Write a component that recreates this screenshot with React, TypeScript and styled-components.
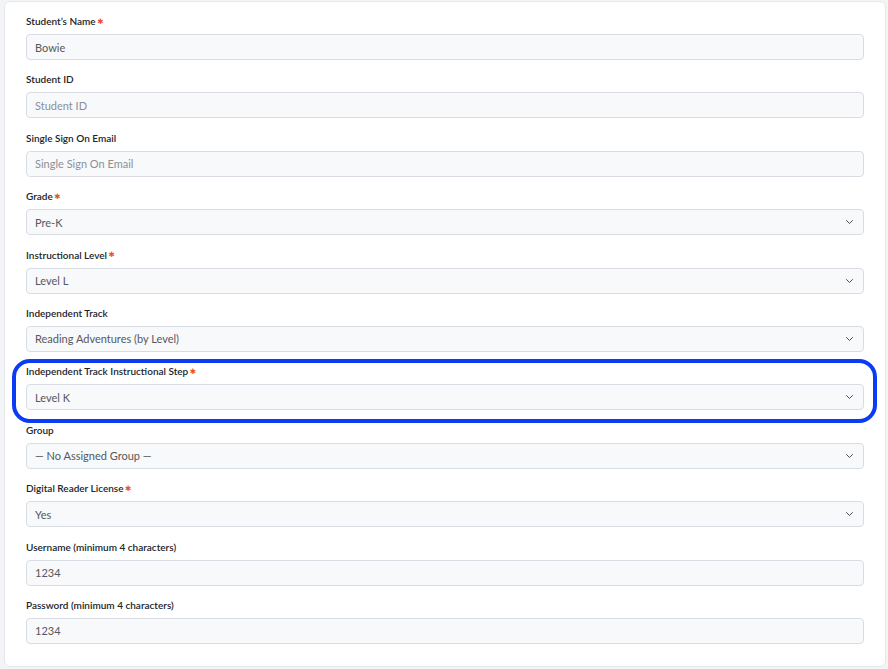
import React from "react";
import styled, { createGlobalStyle } from "styled-components";

const GlobalStyle = createGlobalStyle`
  html, body { margin: 0; padding: 0; background: #f3f4f6; }
  body { font-family: Lato, "Open Sans", Arial, sans-serif; }
  * { box-sizing: border-box; }
`;

const Page = styled.div`
  padding: 1px 2px 2px 4px;
  width: 888px;
  height: 669px;
`;

const Card = styled.div`
  width: 882px;
  height: 666px;
  background: #ffffff;
  border: 1px solid #e6e8eb;
  border-radius: 6px;
  padding: 12px 21px 22px 21px;
  display: flex;
  flex-direction: column;
  gap: 12.4px;
`;

const Field = styled.div`
  position: relative;
  display: flex;
  flex-direction: column;
  gap: 6px;
`;

const Label = styled.div`
  height: 14px;
  line-height: 14px;
  font-size: 10px;
  font-weight: 600;
  color: #222428;
  white-space: nowrap;
  display: flex;
  align-items: center;
`;

const Req = styled.span`
  color: #e8532c;
  margin-left: 1.5px;
  font-family: "DejaVu Sans", sans-serif;
  font-size: 7.5px;
  line-height: 14px;
  position: relative;
  top: 0.5px;
`;

const Control = styled.div<{ $placeholder?: boolean }>`
  height: 26px;
  border: 1px solid #d9dde3;
  border-radius: 4px;
  background: #f8f9fb;
  padding: 0 10px 0 8px;
  display: flex;
  align-items: center;
  justify-content: space-between;
  font-size: 11px;
  color: ${(p) => (p.$placeholder ? "#8c9098" : "#55585e")};
`;

const Highlight = styled.div`
  position: absolute;
  left: -14px;
  right: -13px;
  top: -5.6px;
  bottom: -12.6px;
  border: 4px solid #0a3cf6;
  border-radius: 18px;
  pointer-events: none;
`;

const Chevron = () => (
  <svg width="7" height="4" viewBox="0 0 7 4" fill="none">
    <path d="M0.5 0.5l3 3 3-3" stroke="#4a4d52" strokeWidth="1" strokeLinecap="round" strokeLinejoin="round" />
  </svg>
);

type F = {
  label: string;
  required?: boolean;
  value: string;
  placeholder?: boolean;
  select?: boolean;
  highlight?: boolean;
};

const fields: F[] = [
  { label: "Student’s Name", required: true, value: "Bowie" },
  { label: "Student ID", value: "Student ID", placeholder: true },
  { label: "Single Sign On Email", value: "Single Sign On Email", placeholder: true },
  { label: "Grade", required: true, value: "Pre-K", select: true },
  { label: "Instructional Level", required: true, value: "Level L", select: true },
  { label: "Independent Track", value: "Reading Adventures (by Level)", select: true },
  { label: "Independent Track Instructional Step", required: true, value: "Level K", select: true, highlight: true },
  { label: "Group", value: "— No Assigned Group —", select: true },
  { label: "Digital Reader License", required: true, value: "Yes", select: true },
  { label: "Username (minimum 4 characters)", value: "1234" },
  { label: "Password (minimum 4 characters)", value: "1234" },
];

export default function App() {
  return (
    <>
      <GlobalStyle />
      <Page>
        <Card>
          {fields.map((f) => (
            <Field key={f.label}>
              <Label>
                {f.label}
                {f.required && <Req>✱</Req>}
              </Label>
              <Control $placeholder={f.placeholder}>
                <span>{f.value}</span>
                {f.select && <Chevron />}
              </Control>
              {f.highlight && <Highlight />}
            </Field>
          ))}
        </Card>
      </Page>
    </>
  );
}
